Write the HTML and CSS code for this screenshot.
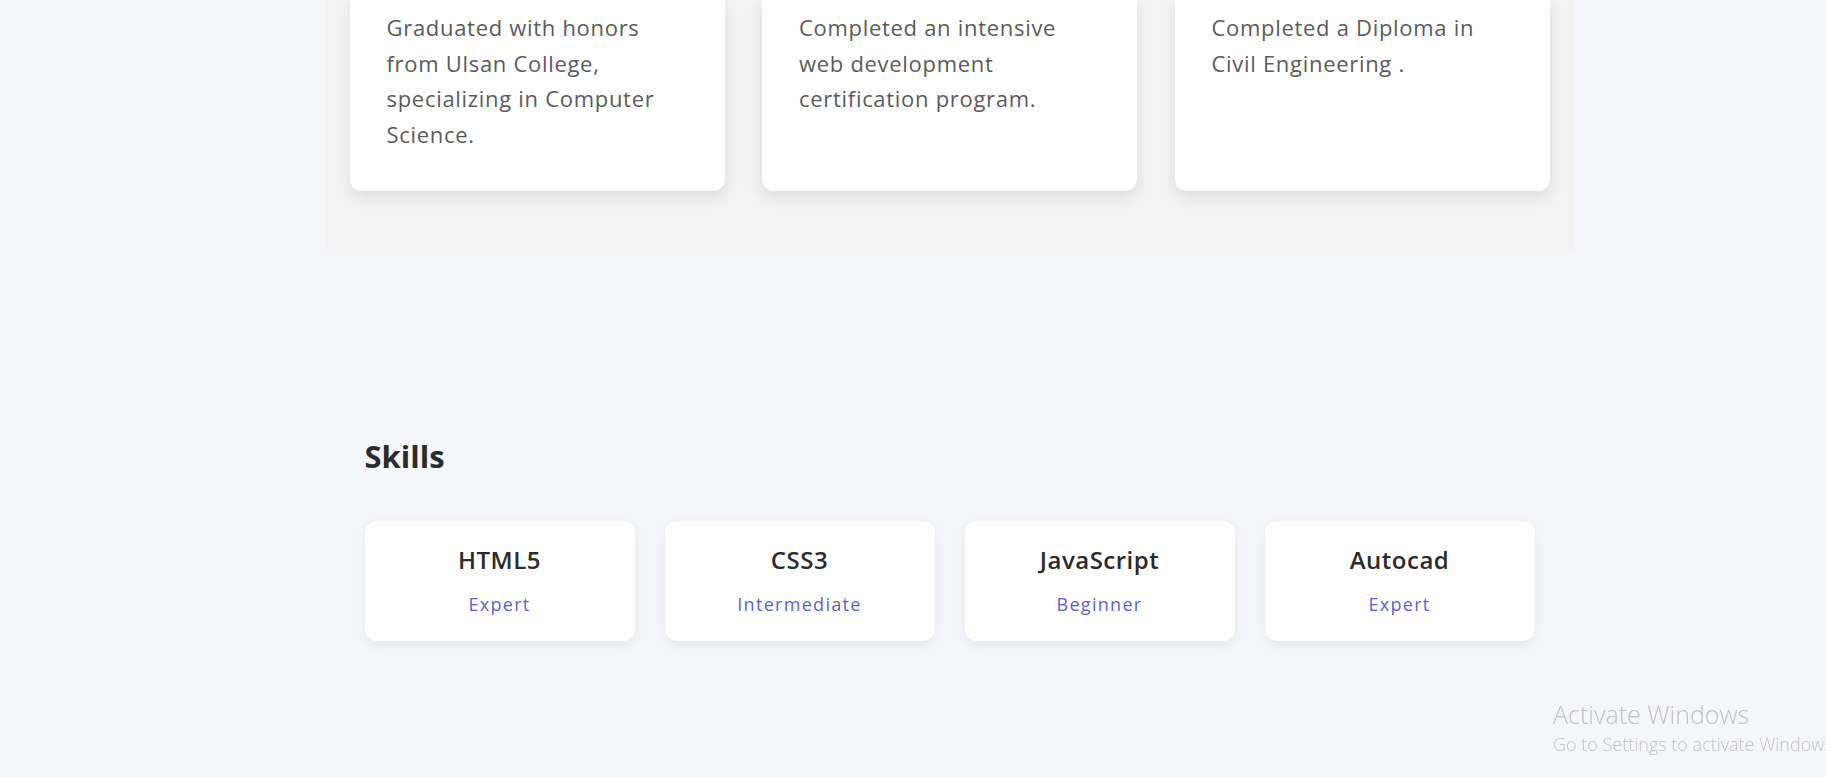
FILE: index.html
```html
<!DOCTYPE html>
<html lang="en">
<head>
<meta charset="utf-8">
<title>Portfolio</title>
<link rel="stylesheet" href="styles.css">
</head>
<body>
<main class="main">
  <section class="education">
    <div class="edu-grid">
      <article class="edu-card">
        <p>Graduated with honors from Ulsan College, specializing in Computer Science.</p>
      </article>
      <article class="edu-card">
        <p>Completed an intensive web development certification program.</p>
      </article>
      <article class="edu-card">
        <p>Completed a Diploma in Civil Engineering .</p>
      </article>
    </div>
  </section>

  <section class="skills">
    <h2 class="skills-title">Skills</h2>
    <div class="skills-grid">
      <div class="skill-card"><h3>HTML5</h3><span class="level">Expert</span></div>
      <div class="skill-card"><h3>CSS3</h3><span class="level">Intermediate</span></div>
      <div class="skill-card"><h3>JavaScript</h3><span class="level">Beginner</span></div>
      <div class="skill-card"><h3>Autocad</h3><span class="level">Expert</span></div>
    </div>
  </section>
</main>

<div class="watermark">
  <div class="wm-title">Activate Windows</div>
  <div class="wm-sub">Go to Settings to activate Windows.</div>
</div>
</body>
</html>
```

FILE: styles.css
```css
* { box-sizing: border-box; }

html, body {
  margin: 0;
  padding: 0;
}

body {
  background: #f5f6fa;
  font-family: "Open Sans", "Noto Sans", sans-serif;
  color: #333;
  height: 777px;
  overflow: hidden;
}

.main {
  margin-left: 73px;
  display: flex;
  flex-direction: column;
  align-items: center;
}

.education {
  width: 1250px;
  background: #f3f3f3;
  padding: 0 25px 62px;
}

.edu-grid {
  display: grid;
  grid-template-columns: repeat(3, 375px);
  column-gap: 37.5px;
}

.edu-card {
  background: #fff;
  border-radius: 0 0 12px 12px;
  box-shadow: 0 6px 16px rgba(0, 0, 0, 0.09);
  padding: 10px 37px 38px;
  height: 191px;
}

.edu-card p {
  margin: 0;
  font-size: 22px;
  line-height: 35.6px;
  letter-spacing: 0.7px;
  color: #5b5b5b;
}

.skills {
  width: 1200px;
  padding: 184px 15px 0;
}

.skills-title {
  margin: 0 0 46px;
  font-size: 31px;
  line-height: 38px;
  font-weight: 700;
  color: #2b2b2b;
}

.skills-grid {
  display: grid;
  grid-template-columns: repeat(4, 270px);
  column-gap: 30px;
}

.skill-card {
  background: #fff;
  border-radius: 12px;
  box-shadow: 0 4px 12px rgba(0, 0, 0, 0.07);
  height: 120px;
  padding: 21px 10px 0;
  display: flex;
  flex-direction: column;
  align-items: center;
  gap: 13px;
}

.skill-card h3 {
  margin: 0;
  font-size: 24px;
  line-height: 36px;
  font-weight: 600;
  letter-spacing: 0.5px;
  color: #2b2b2b;
}

.level {
  font-size: 18px;
  line-height: 27px;
  letter-spacing: 1.3px;
  color: #5b5fdd;
}

.watermark {
  position: fixed;
  left: 1553px;
  top: 697px;
  white-space: nowrap;
  font-family: "Open Sans", "Noto Sans", sans-serif;
  color: #c2c2c4;
}

.wm-title {
  font-size: 25px;
  line-height: 34px;
  font-weight: 300;
}

.wm-sub {
  font-size: 18px;
  line-height: 26px;
  font-weight: 300;
}
```
